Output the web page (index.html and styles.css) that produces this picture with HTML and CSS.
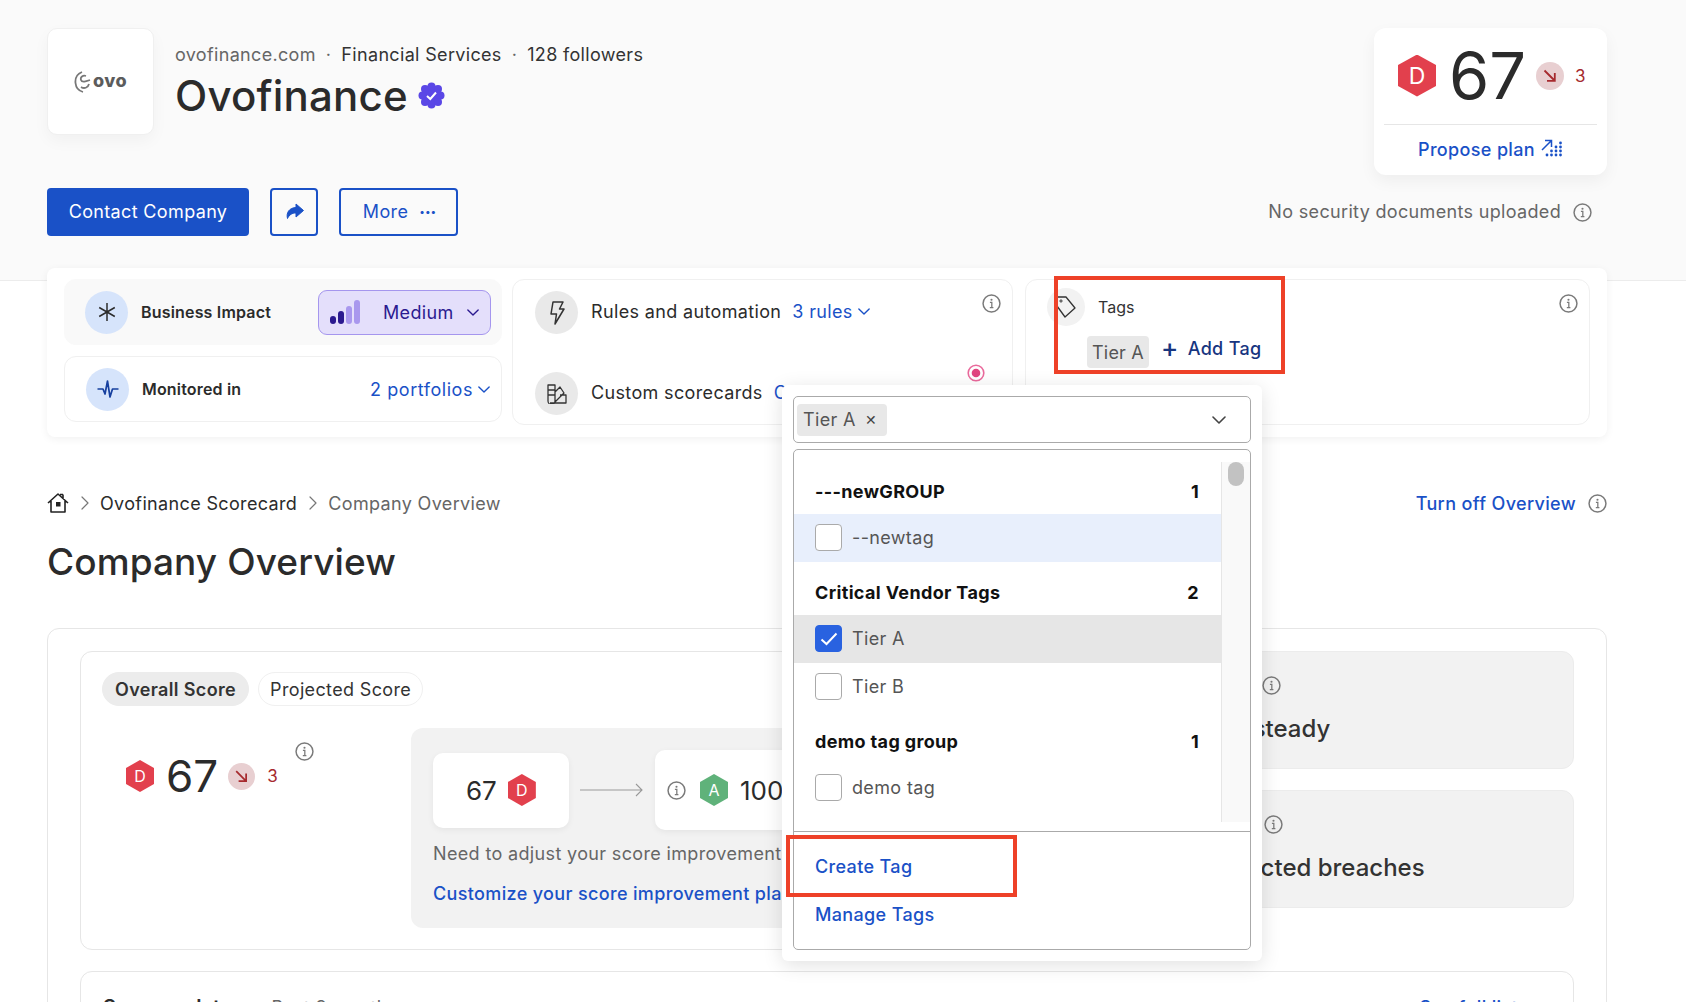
FILE: index.html
```html
<!DOCTYPE html>
<html lang="en">
<head>
  <meta charset="UTF-8">
  <title>Ovofinance - Company Overview</title>
  <link rel="stylesheet" href="styles.css">
</head>

<body>
  <svg class="sprites" aria-hidden="true">
    <symbol id="info" viewBox="0 0 18 18">
      <circle cx="9" cy="9" r="8" fill="none" stroke="currentColor" stroke-width="1.4"/>
      <circle cx="9" cy="5.4" r="1" fill="currentColor"/>
      <path d="M7.5 8H9.3V12.6M7.4 12.8H10.8" fill="none" stroke="currentColor" stroke-width="1.2"/>
    </symbol>
    <symbol id="chevron" viewBox="0 0 14 8">
      <path d="M1 1L7 7L13 1" fill="none" stroke="currentColor" stroke-width="1.6" stroke-linecap="round" stroke-linejoin="round"/>
    </symbol>
    <symbol id="crumb" viewBox="0 0 8 14">
      <path d="M1 1L7 7L1 13" fill="none" stroke="currentColor" stroke-width="1.2" stroke-linecap="round" stroke-linejoin="round"/>
    </symbol>
    <symbol id="down" viewBox="0 0 28 28">
      <circle cx="14" cy="14" r="14" fill="#e8cfd1"/>
      <path d="M8.5 8.5L18.5 18.5M18.8 11V18.8H11" fill="none" stroke="#a62a2e" stroke-width="1.8"/>
    </symbol>
  </svg>

  <header class="top">
    <div class="top-left">
      <div class="company">
        <div class="logo">
          <svg width="17" height="22" viewBox="0 0 17 22">
            <path d="M8 1C3 3 1 7 1.500 12C2 17 5 20 9 21M12 5C9 4 6 6 7 9C8 12 13 10 16 9M15 13C14 17 10 18 7 16" fill="none" stroke="#777" stroke-width="1.800"/>
          </svg>
          <span class="logo-text">ovo</span>
        </div>
        <div>
          <div class="meta"><span class="muted">ovofinance.com</span><span class="dot">·</span>Financial Services<span class="dot">·</span>128 followers</div>
          <h1 class="name">Ovofinance
            <svg class="verified" width="27" height="27" viewBox="0 0 27 27">
              <circle cx="13.500" cy="13.500" r="10.500" fill="#5a47e6"/>
              <circle cx="13.500" cy="4.500" r="4" fill="#5a47e6"/>
              <circle cx="13.500" cy="22.500" r="4" fill="#5a47e6"/>
              <circle cx="4.500" cy="13.500" r="4" fill="#5a47e6"/>
              <circle cx="22.500" cy="13.500" r="4" fill="#5a47e6"/>
              <circle cx="7" cy="7" r="4" fill="#5a47e6"/>
              <circle cx="20" cy="7" r="4" fill="#5a47e6"/>
              <circle cx="7" cy="20" r="4" fill="#5a47e6"/>
              <circle cx="20" cy="20" r="4" fill="#5a47e6"/>
              <path d="M9 14L12.300 17L18 10.500" fill="none" stroke="#fff" stroke-width="2"/>
            </svg>
          </h1>
        </div>
      </div>
      <div class="actions">
        <button class="btn btn-primary">Contact Company</button>
        <button class="btn btn-outline btn-share">
          <svg width="20" height="18" viewBox="0 0 20 18"><path d="M12 1L19.500 7.500L12 14V10C8 10 5.500 11.500 3.500 15.500C2 10 5 4.800 12 4.500Z" fill="#1a51c7" stroke="#1a51c7" stroke-linejoin="round"/></svg>
        </button>
        <button class="btn btn-outline btn-more">More <span class="dots">•••</span></button>
      </div>
    </div>

    <div class="top-right">
      <div class="score-card">
        <div class="score-main">
          <div class="hex hex-big">D</div>
          <div class="score-big">67</div>
          <svg class="trend" width="28" height="28"><use href="#down"/></svg>
          <span class="drop">3</span>
        </div>
        <a class="plan" href="#">Propose plan
          <svg width="22" height="20" viewBox="0 0 22 20" fill="#1a51c7">
            <path d="M1 11L10 2M4 1.500H10.500V8" fill="none" stroke="#1a51c7" stroke-width="1.500"/>
            <circle cx="19.500" cy="4" r="1.400"/><circle cx="15" cy="8" r="1.400"/><circle cx="19.500" cy="8" r="1.400"/>
            <circle cx="10.500" cy="12" r="1.400"/><circle cx="15" cy="12" r="1.400"/><circle cx="19.500" cy="12" r="1.400"/>
            <circle cx="6" cy="16" r="1.400"/><circle cx="10.500" cy="16" r="1.400"/><circle cx="15" cy="16" r="1.400"/><circle cx="19.500" cy="16" r="1.400"/>
          </svg>
        </a>
      </div>
      <div class="docs">No security documents uploaded <svg class="info"><use href="#info"/></svg></div>
    </div>
  </header>

  <section class="strip">
    <div class="strip-left">
      <div class="cell cell-impact">
        <div class="circle circle-blue">
          <svg width="20" height="20" viewBox="0 0 20 20"><path d="M10 1V19M2.200 5.500L17.800 14.500M17.800 5.500L2.200 14.500" stroke="#2d2d2d" stroke-width="1.500"/></svg>
        </div>
        <span class="cell-label">Business Impact</span>
        <div class="medium">
          <svg width="30" height="24" viewBox="0 0 30 24">
            <rect x="0" y="16" width="6" height="8" rx="3" fill="#2b1a90"/>
            <rect x="8" y="11" width="6" height="13" rx="3" fill="#2b1a90"/>
            <rect x="16" y="6" width="6" height="18" rx="3" fill="#a998ee"/>
            <rect x="24" y="0" width="6" height="24" rx="3" fill="#a998ee"/>
          </svg>
          <span class="medium-text">Medium</span>
          <svg class="chev"><use href="#chevron"/></svg>
        </div>
      </div>
      <div class="cell cell-monitor">
        <div class="circle circle-blue">
          <svg width="22" height="20" viewBox="0 0 22 20"><path d="M0.500 10H6L8 15L10.500 2L13 18L15.500 10H21.500" fill="none" stroke="#17409f" stroke-width="1.700" stroke-linejoin="round"/></svg>
        </div>
        <span class="cell-label">Monitored in</span>
        <a class="link portfolios" href="#">2 portfolios <svg class="chev"><use href="#chevron"/></svg></a>
      </div>
    </div>

    <div class="cell cell-rules">
      <div class="rule-row">
        <div class="circle circle-gray">
          <svg width="16" height="24" viewBox="0 0 16 24"><path d="M4 1H14L10.500 8H15L6 23L7.500 13H2Z" fill="none" stroke="#333" stroke-width="1.500" stroke-linejoin="round"/></svg>
        </div>
        <span class="rule-label">Rules and automation</span>
        <a class="link" href="#">3 rules <svg class="chev"><use href="#chevron"/></svg></a>
        <svg class="info info-rules"><use href="#info"/></svg>
      </div>
      <div class="rule-row">
        <div class="circle circle-gray">
          <svg width="20" height="20" viewBox="0 0 20 20"><path d="M1 1H8V17A2 2 0 0 1 1 17ZM1 6H8M1 11H8M8 8L13 3L17 9L8 18M13 11H19V19H3" fill="none" stroke="#333" stroke-width="1.300" stroke-linejoin="round"/></svg>
        </div>
        <span class="rule-label">Custom scorecards</span>
        <a class="link" href="#">Create</a>
        <svg class="pulse" width="18" height="18" viewBox="0 0 18 18"><circle cx="9" cy="9" r="7.800" fill="#fff" stroke="#ea6a9c" stroke-width="1.600"/><circle cx="9" cy="9" r="4.300" fill="#e0457f"/></svg>
      </div>
    </div>

    <div class="cell cell-tags">
      <div class="tags-head">
        <div class="circle circle-tag">
          <svg width="22" height="24" viewBox="0 0 22 24"><path d="M2 2H11L20 13L10 22L2 11Z" fill="none" stroke="#333" stroke-width="1.300" stroke-linejoin="round"/><circle cx="6" cy="6" r="1.100" fill="none" stroke="#333"/></svg>
        </div>
        <span class="tags-title">Tags</span>
        <svg class="info info-tags"><use href="#info"/></svg>
      </div>
      <div class="tags-row">
        <span class="tag-pill">Tier A</span>
        <a class="add-tag" href="#"><span class="plus">+</span> Add Tag</a>
      </div>
    </div>
  </section>

  <main class="content">
    <div class="crumbs">
      <svg width="22" height="20" viewBox="0 0 22 20"><path d="M1 10L11 1L21 10M4 8V19H18V8M16 1.500V6M16 1.500H13" fill="none" stroke="#222" stroke-width="1.600" stroke-linejoin="round"/><rect x="9" y="9" width="4.500" height="4.500" fill="#222"/></svg>
      <svg class="crumb-sep"><use href="#crumb"/></svg>
      <span>Ovofinance Scorecard</span>
      <svg class="crumb-sep"><use href="#crumb"/></svg>
      <span class="crumb-current">Company Overview</span>
      <a class="link link-strong turn-off" href="#">Turn off Overview</a>
      <svg class="info"><use href="#info"/></svg>
    </div>
    <h2 class="page-title">Company Overview</h2>

    <div class="outer">
      <div class="overview">
        <div class="score-box">
          <div class="tabs">
            <span class="tab tab-active">Overall Score</span>
            <span class="tab">Projected Score</span>
          </div>
          <div class="score-body">
            <div class="score-side">
              <div class="hex hex-mid">D</div>
              <div class="score-mid">67</div>
              <svg class="trend-small" width="27" height="27"><use href="#down"/></svg>
              <span class="drop">3</span>
              <svg class="info info-score"><use href="#info"/></svg>
            </div>
            <div class="improve">
              <div class="improve-row">
                <div class="mini mini-from"><span>67</span><div class="hex hex-small">D</div></div>
                <svg width="64" height="14" viewBox="0 0 64 14"><path d="M0 7H62M56 1L62 7L56 13" fill="none" stroke="#999" stroke-width="1.100"/></svg>
                <div class="mini mini-to"><svg class="info"><use href="#info"/></svg><div class="hex hex-small hex-green">A</div><span>100</span></div>
              </div>
              <p class="improve-text">Need to adjust your score improvement plan?</p>
              <a class="link link-strong" href="#">Customize your score improvement plan</a>
            </div>
          </div>
        </div>
        <div class="panels">
          <div class="panel">
            <div class="panel-head"><span class="panel-label">Trend</span><svg class="info"><use href="#info"/></svg></div>
            <div class="panel-value panel-value-steady">Score steady</div>
          </div>
          <div class="panel">
            <div class="panel-head"><span class="panel-label panel-label-wide">Risk</span><svg class="info"><use href="#info"/></svg></div>
            <div class="panel-value">Unexpected breaches</div>
          </div>
        </div>
      </div>
      <div class="updates">
        <span class="updates-title">Score updates</span>
        <span class="updates-range">Past 3 months</span>
        <a class="link link-strong updates-link" href="#">See full list</a>
      </div>
    </div>
  </main>

  <div class="dropdown">
    <div class="select">
      <span class="chip">Tier A <span class="chip-x">✕</span></span>
      <svg class="select-chev"><use href="#chevron"/></svg>
    </div>
    <div class="menu">
      <div class="menu-list">
        <div class="options">
          <div class="group">---newGROUP <span>1</span></div>
          <div class="option option-hover"><span class="check"></span>--newtag</div>
          <div class="group">Critical Vendor Tags <span>2</span></div>
          <div class="option option-selected">
            <span class="check check-on"><svg width="18" height="14" viewBox="0 0 18 14"><path d="M1.500 7.500L6.500 12L16.500 1.500" fill="none" stroke="#fff" stroke-width="2"/></svg></span>Tier A
          </div>
          <div class="option"><span class="check"></span>Tier B</div>
          <div class="group">demo tag group <span>1</span></div>
          <div class="option"><span class="check"></span>demo tag</div>
        </div>
        <div class="scroll"><div class="thumb"></div></div>
      </div>
      <div class="menu-foot">
        <a class="link link-strong" href="#">Create Tag</a>
        <a class="link link-strong" href="#">Manage Tags</a>
      </div>
    </div>
  </div>

  <div class="mark mark-tags"></div>
  <div class="mark mark-create"></div>
</body>
</html>
```

FILE: styles.css
```css
html, body {
  height: 100%;
}

body {
  margin: 0;
  height: 1002px;
  overflow: hidden;
  position: relative;
  background: #fff;
  font-family: Inter, "Liberation Sans", sans-serif;
  font-size: 18px;
  letter-spacing: 0.35px;
  color: #2b2b2b;
}

.sprites {
  display: none;
}

a {
  text-decoration: none;
}

.info {
  width: 19px;
  height: 19px;
  color: #7a7a7a;
  flex: none;
}

.chev {
  width: 12px;
  height: 7px;
  flex: none;
}

.link {
  color: #1a51c7;
  display: inline-flex;
  align-items: center;
  gap: 5px;
  white-space: nowrap;
}

.link-strong {
  font-weight: 500;
}

/* header */
.top {
  height: 281px;
  box-sizing: border-box;
  padding: 28px 79px 0 47px;
  background: #fafafa;
  border-bottom: 1px solid #ececec;
  display: flex;
  justify-content: space-between;
}

.company {
  display: flex;
  gap: 21px;
}

.logo {
  width: 107px;
  height: 107px;
  box-sizing: border-box;
  background: #fff;
  border: 1px solid #f0f0f0;
  border-radius: 10px;
  box-shadow: 0 6px 16px rgba(0, 0, 0, 0.04);
  display: flex;
  align-items: center;
  justify-content: center;
  gap: 2px;
}

.logo-text {
  font-size: 18px;
  font-weight: 800;
  color: #5c5c5c;
  letter-spacing: 0.5px;
  margin-top: -2px;
}

.meta {
  margin-top: 14px;
  line-height: 26px;
  letter-spacing: 0.33px;
  color: #333;
}

.muted {
  color: #666;
}

.dot {
  margin: 0 10px;
  color: #666;
}

.name {
  margin: 2px 0 0;
  font-size: 42px;
  letter-spacing: 0.2px;
  line-height: 52px;
  font-weight: 500;
  color: #2b2b2b;
  display: flex;
  align-items: center;
  gap: 10px;
}

.verified {
  margin-top: -2px;
}

.actions {
  margin-top: 53px;
  display: flex;
  gap: 21px;
}

.btn {
  height: 48px;
  box-sizing: border-box;
  padding: 0 0 2px;
  border-radius: 4px;
  font-family: inherit;
  font-size: 18px;
  letter-spacing: inherit;
  display: flex;
  align-items: center;
  justify-content: center;
}

.btn-primary {
  width: 202px;
  border: none;
  background: #1a51c7;
  color: #fff;
}

.btn-outline {
  background: transparent;
  border: 2px solid #1a51c7;
  color: #1a51c7;
}

.btn-share {
  width: 48px;
  padding: 0;
}

.btn-more {
  width: 119px;
  padding-left: 2px;
  gap: 11px;
}

.dots {
  font-size: 10px;
  letter-spacing: 0;
}

.top-right {
  display: flex;
  flex-direction: column;
  align-items: flex-end;
}

.score-card {
  width: 233px;
  height: 147px;
  box-sizing: border-box;
  padding: 0 10px;
  background: #fff;
  border-radius: 12px;
  box-shadow: 0 6px 16px rgba(0, 0, 0, 0.05);
}

.score-main {
  height: 96px;
  padding-left: 14px;
  border-bottom: 1px solid #e6e6e6;
  display: flex;
  align-items: center;
  letter-spacing: 0;
}

.hex {
  clip-path: polygon(50% 0, 100% 25%, 100% 75%, 50% 100%, 0 75%, 0 25%);
  background: #e2404d;
  color: #fff;
  letter-spacing: 0;
  display: flex;
  align-items: center;
  justify-content: center;
  flex: none;
}

.hex-big {
  width: 38px;
  height: 42px;
  font-size: 23px;
  margin-top: -1px;
}

.hex-mid {
  width: 28px;
  height: 32px;
  font-size: 16px;
}

.hex-small {
  width: 28px;
  height: 32px;
  font-size: 16px;
  font-weight: 400;
}

.hex-green {
  background: #5fb27a;
}

.score-big {
  margin-left: 13px;
  font-size: 65px;
  line-height: 66px;
  color: #2b2b2b;
}

.trend {
  margin-left: 10px;
}

.drop {
  margin-left: 11px;
  color: #a62a2e;
  font-size: 17px;
  letter-spacing: 0;
}

.plan {
  height: 48px;
  color: #1a51c7;
  font-weight: 500;
  display: flex;
  align-items: center;
  justify-content: center;
  gap: 6px;
}

.docs {
  margin-top: 25px;
  padding-right: 15px;
  line-height: 24px;
  letter-spacing: 0.33px;
  color: #666;
  display: flex;
  align-items: center;
  gap: 5px;
}

.docs .info {
  margin-left: 7px;
}

/* strip under the header */
.strip {
  margin: -13px 79px 0 47px;
  box-sizing: border-box;
  height: 169px;
  padding: 11px 0 0 17px;
  position: relative;
  background: #fff;
  border-radius: 8px;
  box-shadow: 0 2px 8px rgba(0, 0, 0, 0.06);
  display: grid;
  grid-template-columns: 438px 501px 567px;
  column-gap: 10px;
  align-items: start;
}

.strip-left {
  display: flex;
  flex-direction: column;
  gap: 11px;
}

.cell {
  box-sizing: border-box;
  border: 1px solid #f0f0f0;
  border-radius: 12px;
}

.cell-impact,
.cell-monitor {
  height: 66px;
  padding: 0 11px 0 20px;
  display: flex;
  align-items: center;
}

.cell-monitor {
  padding-left: 21px;
}

.cell-impact {
  padding-right: 10px;
  background: #f9f9f9;
  border-color: #f9f9f9;
}

.circle {
  width: 43px;
  height: 43px;
  border-radius: 50%;
  display: flex;
  align-items: center;
  justify-content: center;
  flex: none;
}

.circle-blue {
  background: #d6e4fb;
}

.circle-gray {
  background: #e9e9e9;
}

.cell-label {
  margin-left: 13px;
  font-size: 16px;
  font-weight: 600;
  letter-spacing: 0.18px;
  color: #2b2b2b;
}

.medium {
  margin-left: auto;
  width: 173px;
  height: 45px;
  box-sizing: border-box;
  padding: 0 11px 0 11px;
  background: #e4dffb;
  border: 1px solid #a596ee;
  border-radius: 9px;
  color: #2b1a90;
  display: flex;
  align-items: center;
}

.medium-text {
  margin-left: 23px;
  margin-right: auto;
}

.portfolios {
  margin-left: auto;
  letter-spacing: 0.55px;
}

.cell-rules {
  height: 146px;
  padding: 11px 11px 0 22px;
  display: flex;
  flex-direction: column;
  gap: 38px;
}

.rule-row {
  display: flex;
  align-items: center;
  height: 43px;
}

.rule-label {
  margin: -2px 11px 0 13px;
}

.rule-row .link {
  margin-top: -2px;
}

.info-rules {
  margin-left: auto;
  align-self: flex-start;
  margin-top: 3px;
}

.pulse {
  margin-left: auto;
  margin-right: 16px;
  align-self: flex-start;
  margin-top: -8px;
}

.cell-tags {
  height: 146px;
  margin-left: 2px;
  padding: 8px 11px 0 21px;
}

.tags-head {
  display: flex;
  align-items: center;
}

.circle-tag {
  width: 38px;
  height: 38px;
  background: #f2f2f2;
}

.tags-title {
  margin-left: 13px;
  font-size: 16px;
  letter-spacing: 0;
  color: #333;
}

.info-tags {
  margin-left: auto;
  align-self: flex-start;
  margin-top: 6px;
}

.tags-row {
  margin: 10px 0 0 40px;
  display: flex;
  align-items: center;
  gap: 12px;
}

.tag-pill {
  height: 32px;
  padding: 0 5px;
  background: #e8e8e8;
  border-radius: 4px;
  color: #555;
  line-height: 34px;
  letter-spacing: 0.2px;
}

.add-tag {
  color: #17357f;
  font-weight: 500;
  display: flex;
  align-items: center;
  gap: 9px;
  margin-top: -8px;
}

.plus {
  font-size: 26px;
  font-weight: 500;
  line-height: 24px;
}

/* main content */
.content {
  padding: 0 47px 0 47px;
  width: 1560px;
  box-sizing: content-box;
}

.crumbs {
  margin-top: 54px;
  height: 24px;
  display: flex;
  align-items: center;
  color: #2b2b2b;
}

.crumb-sep {
  width: 8px;
  height: 14px;
  margin: 0 11.500px;
  color: #777;
}

.crumb-current {
  color: #666;
}

.turn-off {
  margin-left: auto;
  margin-right: 12px;
}

.page-title {
  margin: 25px 0 0;
  font-size: 37px;
  letter-spacing: 0.1px;
  line-height: 44px;
  font-weight: 500;
  color: #2b2b2b;
}

.outer {
  margin-top: 44px;
  height: 600px;
  box-sizing: border-box;
  padding: 22px 32px 0;
  border: 1px solid #e6e6e6;
  border-radius: 12px;
}

.overview {
  display: flex;
  gap: 20px;
}

.score-box {
  flex: 1;
  height: 299px;
  box-sizing: border-box;
  padding: 20px 20px 0 21px;
  border: 1px solid #e6e6e6;
  border-radius: 12px;
}

.tabs {
  display: flex;
  gap: 9px;
}

.tab {
  height: 34px;
  box-sizing: border-box;
  padding: 0 11px;
  border: 1px solid #f0f0f0;
  border-radius: 17px;
  line-height: 33px;
  color: #333;
}

.tab-active {
  padding: 0 12px;
  background: #ececec;
  border-color: #ececec;
  font-weight: 600;
}

.score-body {
  margin-top: 22px;
  display: flex;
}

.score-side {
  width: 309px;
  height: 68px;
  box-sizing: border-box;
  margin-top: 14px;
  padding-left: 24px;
  letter-spacing: 0;
  display: flex;
  align-items: center;
  flex: none;
}

.score-mid {
  margin-left: 12px;
  font-size: 44px;
}

.trend-small {
  margin-left: 10px;
}

.score-side .drop {
  margin-left: 12px;
}

.info-score {
  align-self: flex-start;
  margin-left: 17px;
}

.improve {
  flex: 1;
  height: 200px;
  box-sizing: border-box;
  padding: 22px 0 0 22px;
  background: #f2f2f2;
  border-radius: 12px;
}

.improve-row {
  display: flex;
  align-items: center;
  gap: 11px;
}

.mini {
  background: #fff;
  border-radius: 10px;
  box-shadow: 0 2px 6px rgba(0, 0, 0, 0.06);
  font-size: 26px;
  letter-spacing: 0;
  display: flex;
  align-items: center;
}

.mini-from {
  width: 136px;
  height: 75px;
  box-sizing: border-box;
  padding-left: 33px;
  gap: 11px;
}

.mini-to {
  width: 200px;
  height: 80px;
  box-sizing: border-box;
  padding-left: 12px;
  gap: 14px;
}

.mini-to span {
  margin-left: -2px;
}

.improve-text {
  margin: 12px 0 17px;
  line-height: 24px;
  color: #666;
}

.panels {
  width: 424px;
  display: flex;
  flex-direction: column;
  gap: 21px;
  flex: none;
}

.panel {
  height: 118px;
  box-sizing: border-box;
  padding: 23px 0 0 21.500px;
  background: #f2f2f2;
  border: 1px solid #ececec;
  border-radius: 12px;
}

.panel-head {
  display: flex;
  align-items: center;
}

.panel-label {
  width: 89.500px;
}

.panel-label-wide {
  width: 91.500px;
}

.panel-value {
  margin-top: 18px;
  font-size: 24px;
  letter-spacing: 0;
  font-weight: 500;
  color: #333;
}

.panel-value-steady {
  margin-left: 7px;
}

.updates {
  margin-top: 21px;
  height: 100px;
  box-sizing: border-box;
  padding: 23px 55px 0 22px;
  border: 1px solid #e6e6e6;
  border-radius: 12px;
  display: flex;
  align-items: baseline;
}

.updates-title {
  font-size: 20px;
  letter-spacing: 0;
  font-weight: 600;
}

.updates-range {
  margin-left: 29px;
  color: #666;
}

.updates-link {
  margin-left: auto;
}

/* tag dropdown, open over the page */
.dropdown {
  position: absolute;
  left: 782px;
  top: 385px;
  width: 480px;
  height: 576px;
  box-sizing: border-box;
  padding: 11px 11px 0 11px;
  background: #fff;
  border-radius: 6px;
  box-shadow: 0 4px 20px rgba(0, 0, 0, 0.12);
}

.select {
  height: 47px;
  box-sizing: border-box;
  padding: 0 24px 0 3px;
  border: 1px solid #aaa;
  border-radius: 5px;
  display: flex;
  align-items: center;
  justify-content: space-between;
}

.chip {
  height: 32px;
  padding: 0 10px 0 6px;
  background: #e8e8e8;
  border-radius: 4px;
  color: #555;
  line-height: 32px;
  display: flex;
  align-items: center;
  gap: 9px;
}

.chip-x {
  font-size: 14px;
  color: #444;
}

.select-chev {
  width: 14px;
  height: 8px;
  color: #444;
}

.menu {
  margin-top: 6px;
  height: 501px;
  box-sizing: border-box;
  border: 1px solid #aaa;
  border-radius: 5px;
}

.menu-list {
  height: 381px;
  border-bottom: 1px solid #aaa;
  display: flex;
}

.options {
  flex: 1;
  padding-top: 20px;
  overflow: hidden;
}

.group {
  height: 44px;
  box-sizing: border-box;
  padding: 0 22px 2px 21px;
  font-weight: 700;
  color: #111;
  display: flex;
  align-items: center;
  justify-content: space-between;
}

.group:not(:first-child) {
  margin-top: 9px;
}

.option {
  height: 48px;
  box-sizing: border-box;
  padding: 0 0 1px 21px;
  color: #555;
  display: flex;
  align-items: center;
  gap: 10px;
}

.option-hover {
  background: #e8effc;
}

.option-selected {
  background: #e6e6e6;
}

.check {
  width: 27px;
  height: 27px;
  box-sizing: border-box;
  background: #fff;
  border: 1px solid #aaa;
  border-radius: 4px;
  display: flex;
  align-items: center;
  justify-content: center;
}

.check-on {
  background: #2962e0;
  border-color: #2962e0;
}

.scroll {
  width: 29px;
  height: 360px;
  margin-top: 12px;
  box-sizing: border-box;
  padding-left: 6px;
  background: #f9f9f9;
  border-left: 1px solid #e6e6e6;
}

.thumb {
  width: 16px;
  height: 24px;
  background: #c2c2c2;
  border-radius: 8px;
}

.menu-foot {
  padding: 24px 0 0 21px;
  display: flex;
  flex-direction: column;
  align-items: flex-start;
  gap: 26px;
  line-height: 22px;
}

/* annotation boxes drawn on the screenshot */
.mark {
  position: absolute;
  box-sizing: border-box;
  border: 4px solid #ee4128;
}

.mark-tags {
  left: 1054px;
  top: 276px;
  width: 231px;
  height: 98px;
}

.mark-create {
  left: 786px;
  top: 835px;
  width: 231px;
  height: 62px;
}
```
